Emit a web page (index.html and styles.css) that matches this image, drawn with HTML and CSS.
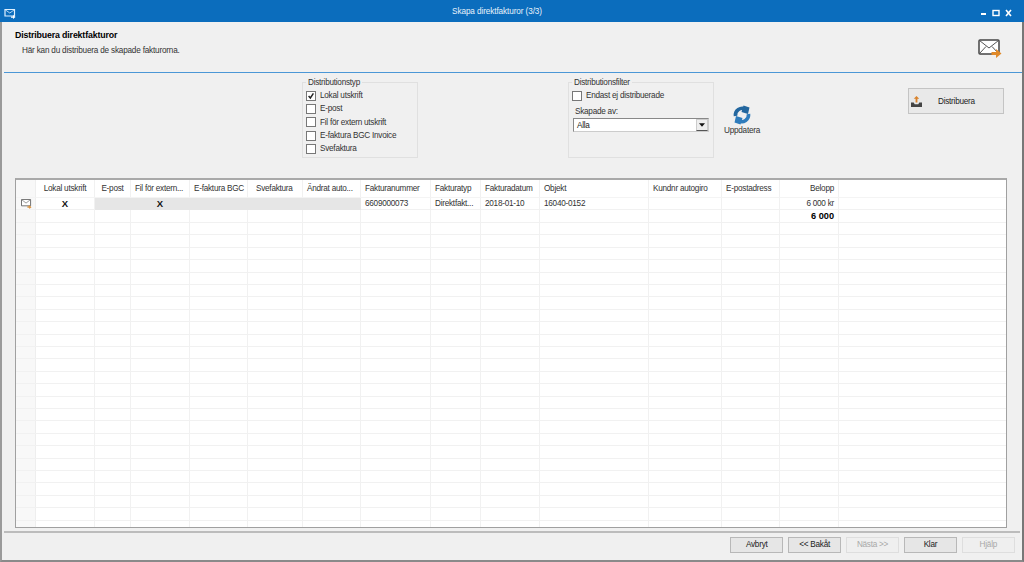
FILE: index.html
```html
<!DOCTYPE html>
<html lang="sv">
<head>
<meta charset="utf-8">
<title>Skapa direktfakturor (3/3)</title>
<link rel="stylesheet" href="styles.css">
</head>
<body>
<div class="window">
  <div class="titlebar">
    <svg class="title-icon" viewBox="0 0 12 11"><path d="M1 1.500h9.500v6.500H1z" fill="#0b6dbd" stroke="#dff0ff" stroke-width="1.200"/><path d="M1.500 2 5.800 5 10 2" fill="none" stroke="#dff0ff" stroke-width=".8"/><path d="M7 8.500h2V7l2.500 2L9 11V9.800H7z" fill="#fff"/></svg>
    <div class="title-text">Skapa direktfakturor (3/3)</div>
    <div class="controls">
      <svg viewBox="0 0 32 8"><path d="M1 5h5" stroke="#fff" stroke-width="2"/><rect x="13" y="1.500" width="6" height="5" fill="none" stroke="#fff" stroke-width="1.400"/><path d="M26 1l5 6M31 1l-5 6" stroke="#fff" stroke-width="1.600"/></svg>
    </div>
  </div>
  <div class="wizard-head">
    <div>
      <div class="head-title">Distribuera direktfakturor</div>
      <div class="head-sub">Här kan du distribuera de skapade fakturorna.</div>
    </div>
    <svg class="head-icon" viewBox="0 0 24 19">
      <rect x="1" y="1" width="20" height="14" rx="1" fill="#fff" stroke="#444" stroke-width="1.500"/>
      <path d="M1.500 1.500 11 9l9.500-7.500M1.500 14.500 8 7.500M20.500 14.500 14 7.500" fill="none" stroke="#555" stroke-width="1"/>
      <path d="M13.500 13h4.500v-3l5.500 4.500L18 19v-3h-4.500z" fill="#e08a2a"/>
    </svg>
  </div>
  <div class="toolbar">
    <fieldset class="group type-group">
      <legend>Distributionstyp</legend>
      <div class="check"><span class="box"><svg viewBox="0 0 10 10"><path d="M2 5l2.200 2.500L8 1.800" fill="none" stroke="#222" stroke-width="1.800"/></svg></span>Lokal utskrift</div>
      <div class="check"><span class="box"></span>E-post</div>
      <div class="check"><span class="box"></span>Fil för extern utskrift</div>
      <div class="check"><span class="box"></span>E-faktura BGC Invoice</div>
      <div class="check"><span class="box"></span>Svefaktura</div>
    </fieldset>
    <fieldset class="group filter-group">
      <legend>Distributionsfilter</legend>
      <div class="check"><span class="box"></span>Endast ej distribuerade</div>
      <div class="skapade">Skapade av:</div>
      <div class="combo"><span>Alla</span><span class="combo-btn"><svg viewBox="0 0 7 4"><path d="M0 0h7L3.500 4z" fill="#111"/></svg></span></div>
    </fieldset>
    <div class="refresh">
      <svg viewBox="0 0 20 20">
        <path d="M3.500 11A6.800 6.800 0 0 1 13.500 4.200" fill="none" stroke="#23679f" stroke-width="3.600"/>
        <path d="M16.500 9A6.800 6.800 0 0 1 6.500 15.800" fill="none" stroke="#2f7cbc" stroke-width="3.600"/>
        <path d="M11.500 0.500 17.500 2.500 16 9 9.500 7z" fill="#23679f"/>
        <path d="M8.500 19.500 2.500 17.500 4 11 10.500 13z" fill="#2f7cbc"/>
      </svg>
      <span>Uppdatera</span>
    </div>
    <button class="dist-btn">
      <svg viewBox="0 0 12 12"><path d="M0 7h3l1 2h4l1-2h3v5H0z" fill="#444"/><path d="M6 0l3 3H7v4H5V3H3z" fill="#d9822b"/></svg>
      <span>Distribuera</span>
    </button>
  </div>
  <div class="grid">
    <div class="row head">
      <div class="c rh"></div><div class="c ctr">Lokal utskrift</div><div class="c ctr">E-post</div><div class="c">Fil för extern...</div><div class="c">E-faktura BGC</div><div class="c indent">Svefaktura</div><div class="c">Ändrat auto...</div><div class="c">Fakturanummer</div><div class="c">Fakturatyp</div><div class="c">Fakturadatum</div><div class="c">Objekt</div><div class="c">Kundnr autogiro</div><div class="c">E-postadress</div><div class="c right">Belopp</div><div class="c fill"></div>
    </div>
    <div class="row">
      <div class="c rh"><svg viewBox="0 0 12 11"><path d="M.5.500h10v7h-10z" fill="#fff" stroke="#666"/><path d="M1 1l4.500 3.500L10 1" fill="none" stroke="#777" stroke-width=".8"/><path d="M7 8h2V6.500L11.500 9 9 11V9.500H7z" fill="#d9923f"/></svg></div>
      <div class="c ctr x">X</div><div class="c grey"></div><div class="c grey ctr x">X</div><div class="c grey"></div><div class="c grey"></div><div class="c grey"></div><div class="c">6609000073</div><div class="c">Direktfakt...</div><div class="c">2018-01-10</div><div class="c">16040-0152</div><div class="c"></div><div class="c"></div><div class="c right">6 000 kr</div><div class="c fill"></div>
    </div>
    <div class="row">
      <div class="c rh"></div><div class="c"></div><div class="c"></div><div class="c"></div><div class="c"></div><div class="c"></div><div class="c"></div><div class="c"></div><div class="c"></div><div class="c"></div><div class="c"></div><div class="c"></div><div class="c"></div><div class="c right total">6 000</div><div class="c fill"></div>
    </div>
    <div class="rows-empty"></div>
  </div>
  <div class="footer">
    <button class="btn">Avbryt</button>
    <button class="btn">&lt;&lt; Bakåt</button>
    <button class="btn off">Nästa &gt;&gt;</button>
    <button class="btn">Klar</button>
    <button class="btn off">Hjälp</button>
  </div>
</div>
</body>
</html>
```

FILE: styles.css
```css
* { box-sizing: border-box; }
html, body { margin: 0; padding: 0; }
body { width: 1024px; height: 562px; overflow: hidden; font-family: "Liberation Sans", Arial, sans-serif; font-size: 8.200px; letter-spacing: -0.25px; color: #333; }
.window { width: 1024px; height: 562px; display: flex; flex-direction: column; background: #f0f0f0; border-left: 2px solid #9a9a9a; border-right: 2px solid #777; border-bottom: 2px solid #8a8a8a; }
.titlebar { height: 22px; margin: 0 -2px; background: #0b6dbd; color: #e8f2fb; display: flex; align-items: center; padding: 0 12px 0 4px; flex: none; }
.title-icon { width: 12px; height: 11px; margin-top: 5px; }
.title-text { flex: 1; text-align: center; margin-left: -2px; letter-spacing: -0.1px; }
.controls { width: 32px; height: 8px; margin-top: 4px; display: flex; }
.controls svg { width: 32px; height: 8px; }
.wizard-head { height: 51px; margin: 0 0 0 2px; border-bottom: 1px solid #4b97d6; display: flex; justify-content: space-between; padding: 8px 20px 0 11px; flex: none; }
.head-title { font-weight: bold; color: #000; font-size: 8.800px; letter-spacing: -0.15px; line-height: 10px; }
.head-sub { margin: 5px 0 0 7px; line-height: 11px; color: #333; letter-spacing: -0.2px; }
.head-icon { width: 24px; height: 19px; margin-top: 9px; }
.toolbar { height: 106px; display: flex; align-items: flex-start; padding-left: 300px; flex: none; }
.group { margin: 5px 0 0; border: 1px solid #e0e0e0; padding: 2px 0 0 3px; min-width: 0; height: 80px; }
.group legend { padding: 0 2px; margin-left: 0; line-height: 9px; color: #333; }
.type-group { width: 116px; }
.filter-group { width: 146px; margin-left: 150px; }
.check { height: 13.300px; display: flex; align-items: center; gap: 4px; color: #333; }
.box { width: 10px; height: 10px; border: 1px solid #777; background: #fff; display: block; flex: none; }
.box svg { display: block; width: 8px; height: 8px; }
.skapade { margin: 4px 0 0 3px; line-height: 11px; color: #333; }
.combo { width: 136px; height: 14px; margin: 1px 0 0 1px; background: #fff; border: 1px solid #888; border-right-color: #ccc; border-bottom-color: #ccc; display: flex; justify-content: space-between; align-items: center; padding-left: 3px; color: #222; }
.combo-btn { width: 12px; height: 12px; background: #eee; border: 1px solid #ccc; border-bottom-color: #555; display: flex; align-items: center; justify-content: center; }
.combo-btn svg { width: 6px; height: 4px; }
.refresh { width: 36px; margin: 32px 0 0 10px; display: flex; flex-direction: column; align-items: center; gap: 1px; color: #333; white-space: nowrap; }
.refresh svg { width: 20px; height: 20px; }
.dist-btn { width: 96px; height: 26px; margin: 15px 0 0 148px; border: 1px solid #c4c4c4; background: #e9e9e9; display: flex; align-items: center; padding: 0 0 0 2px; font: inherit; letter-spacing: inherit; color: #222; }
.dist-btn svg { width: 11px; height: 11px; }
.dist-btn span { margin-left: 16px; }
.grid { margin: -1px 15px 0 13px; height: 350px; background: #fff; border: 1px solid #a0a0a0; border-top: 2px solid #a9a9a9; display: flex; flex-direction: column; overflow: hidden; flex: none; }
.row { display: grid; grid-template-columns: 20px 59px 36px 59px 58px 55px 58px 70px 50px 59px 109px 73px 58px 59px 1fr; height: 12.400px; flex: none; }
.row.head { height: 18px; }
.c { border-right: 1px solid #f1f1f1; border-bottom: 1px solid #f1f1f1; padding: 0 4px; line-height: 12.400px; white-space: nowrap; overflow: hidden; color: #333; }
.head .c { line-height: 17px; border-bottom-color: #f4f4f4; }
.rh { background: #f8f8f8; padding: 1px 0 0 5px; border-right-color: #eeeeee; }
.rh svg { display: block; width: 11px; height: 10px; }
.ctr { text-align: center; }
.right { text-align: right; }
.indent { padding-left: 8px; }
.grey { background: #e6e6e6; border-color: #e6e6e6; }
.x { color: #111; font-size: 9.500px; font-weight: bold; letter-spacing: 0; }
.total { font-weight: bold; color: #000; font-size: 9.200px; letter-spacing: 0; line-height: 13px; }
.fill { border-right: 0; }
.rows-empty { flex: 1; background-color: #fff;
  background-image:
    repeating-linear-gradient(to bottom, transparent 0, transparent 11.400px, #f1f1f1 11.400px, #f1f1f1 12.400px),
    linear-gradient(to right, #f8f8f8 19px, #eeeeee 19px, #eeeeee 20px, transparent 20px, transparent 78px, #f1f1f1 78px, #f1f1f1 79px, transparent 79px, transparent 114px, #f1f1f1 114px, #f1f1f1 115px, transparent 115px, transparent 173px, #f1f1f1 173px, #f1f1f1 174px, transparent 174px, transparent 231px, #f1f1f1 231px, #f1f1f1 232px, transparent 232px, transparent 286px, #f1f1f1 286px, #f1f1f1 287px, transparent 287px, transparent 344px, #f1f1f1 344px, #f1f1f1 345px, transparent 345px, transparent 414px, #f1f1f1 414px, #f1f1f1 415px, transparent 415px, transparent 464px, #f1f1f1 464px, #f1f1f1 465px, transparent 465px, transparent 523px, #f1f1f1 523px, #f1f1f1 524px, transparent 524px, transparent 632px, #f1f1f1 632px, #f1f1f1 633px, transparent 633px, transparent 705px, #f1f1f1 705px, #f1f1f1 706px, transparent 706px, transparent 763px, #f1f1f1 763px, #f1f1f1 764px, transparent 764px, transparent 822px, #f1f1f1 822px, #f1f1f1 823px, transparent 823px); }
.footer { flex: 1; margin: 3px 2px 0 2px; border-top: 2px solid #bcbcbc; display: flex; justify-content: flex-end; gap: 4.500px; padding: 4px 5px 0 0; }
.btn { width: 53.400px; height: 16px; padding: 0; border: 1px solid #b8b8b8; background: #e6e6e6; font: inherit; letter-spacing: inherit; color: #222; line-height: 14px; }
.btn.off { background: #efefef; border-color: #dedede; color: #a8a8a8; }
```
